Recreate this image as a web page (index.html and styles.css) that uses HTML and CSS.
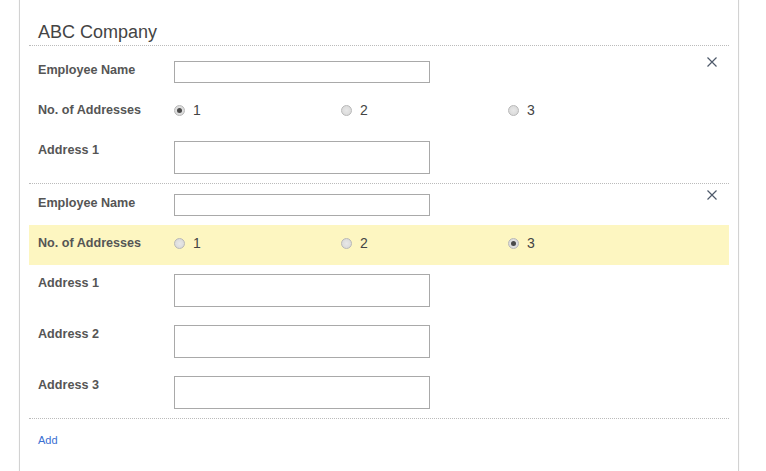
FILE: index.html
```html
<!DOCTYPE html>
<html lang="en">

<head>
    <meta charset="UTF-8">
    <meta name="viewport" content="width=device-width, initial-scale=1.0">
    <title>Employees</title>
    <link rel="stylesheet" href="styles.css">
</head>

<body>
    <div class="panel">
        <h2 class="title">ABC Company</h2>

        <div class="employee">
            <div class="row row-name">
                <label class="label">Employee Name</label>
                <input class="field" type="text">
                <button class="remove" title="Remove">
                    <svg width="10" height="10" viewBox="0 0 10 10"><path d="M0.5 0.5 L9.5 9.5 M9.5 0.5 L0.5 9.5" /></svg>
                </button>
            </div>
            <div class="row row-count">
                <label class="label">No. of Addresses</label>
                <div class="choices">
                    <span class="choice"><span class="radio checked"></span>1</span>
                    <span class="choice"><span class="radio"></span>2</span>
                    <span class="choice"><span class="radio"></span>3</span>
                </div>
            </div>
            <div class="row row-address">
                <label class="label">Address 1</label>
                <input class="field field-tall" type="text">
            </div>
        </div>

        <div class="employee">
            <div class="row row-name">
                <label class="label">Employee Name</label>
                <input class="field" type="text">
                <button class="remove" title="Remove">
                    <svg width="10" height="10" viewBox="0 0 10 10"><path d="M0.5 0.5 L9.5 9.5 M9.5 0.5 L0.5 9.5" /></svg>
                </button>
            </div>
            <div class="row row-count active">
                <label class="label">No. of Addresses</label>
                <div class="choices">
                    <span class="choice"><span class="radio"></span>1</span>
                    <span class="choice"><span class="radio"></span>2</span>
                    <span class="choice"><span class="radio checked"></span>3</span>
                </div>
            </div>
            <div class="row row-address">
                <label class="label">Address 1</label>
                <input class="field field-tall" type="text">
            </div>
            <div class="row row-address">
                <label class="label">Address 2</label>
                <input class="field field-tall" type="text">
            </div>
            <div class="row row-address">
                <label class="label">Address 3</label>
                <input class="field field-tall" type="text">
            </div>
        </div>

        <div class="actions">
            <a href="#" class="add">Add</a>
        </div>
    </div>
</body>

</html>
```
FILE: styles.css
```css
* {
    margin: 0;
    padding: 0;
    box-sizing: border-box;
}

body {
    font-family: "Liberation Sans", Arial, sans-serif;
    color: #555;
    background: #fff;
}

.panel {
    width: 720px;
    min-height: 471px;
    margin-left: 19px;
    padding: 0 9px;
    border-left: 1px solid #d2d2d2;
    border-right: 1px solid #d2d2d2;
    box-shadow: 0 0 1px #e6e6e6;
}

.title {
    padding: 22px 9px 3px;
    font-size: 18px;
    line-height: 20px;
    font-weight: normal;
    color: #444;
    border-bottom: 1px dotted #bbb;
}

.employee {
    border-bottom: 1px dotted #bbb;
}

.employee:first-of-type {
    padding-top: 5px;
}

.row {
    position: relative;
    display: flex;
    align-items: flex-start;
}

.row .label {
    width: 145px;
    flex: none;
    padding: 10px 0 0 9px;
    font-size: 12.6px;
    line-height: 17px;
    font-weight: bold;
    color: #555;
}

.row-name {
    height: 41px;
}

.row-name .label {
    margin-top: 1px;
}

.row-name .field {
    margin-top: 10px;
}

.row-count {
    height: 40px;
}

.row-count.active {
    background-color: #fdf6c1;
}

.row-address {
    height: 51px;
}

.field {
    width: 256px;
    height: 22px;
    padding: 0 3px;
    border: 1px solid #a9a9a9;
    font: 13px "Liberation Sans", Arial, sans-serif;
    outline: none;
}

.row-address .field {
    margin-top: 9px;
}

.field-tall {
    height: 33px;
}

.choices {
    display: flex;
    padding-top: 10px;
}

.choice {
    display: flex;
    align-items: center;
    width: 167px;
    font-size: 14px;
    line-height: 17px;
    color: #444;
}

.radio {
    width: 11px;
    height: 11px;
    margin-right: 8px;
    border: 1px solid #b8b8b8;
    border-radius: 50%;
    background: radial-gradient(circle, #e8e8e8 0, #d6d6d6 100%);
    position: relative;
}

.radio.checked::after {
    content: "";
    position: absolute;
    left: 2px;
    top: 2px;
    width: 5px;
    height: 5px;
    border-radius: 50%;
    background-color: #4a4a4a;
}

.remove {
    position: absolute;
    top: 6px;
    right: 12px;
    width: 10px;
    height: 10px;
    border: none;
    background: none;
    cursor: pointer;
}

.remove svg {
    display: block;
}

.remove path {
    stroke: #4e5a6a;
    stroke-width: 1.2;
    fill: none;
}

.actions {
    padding: 11px 9px;
}

.add {
    font-size: 11px;
    line-height: 14px;
    color: #3a6fd2;
    text-decoration: none;
}
```
